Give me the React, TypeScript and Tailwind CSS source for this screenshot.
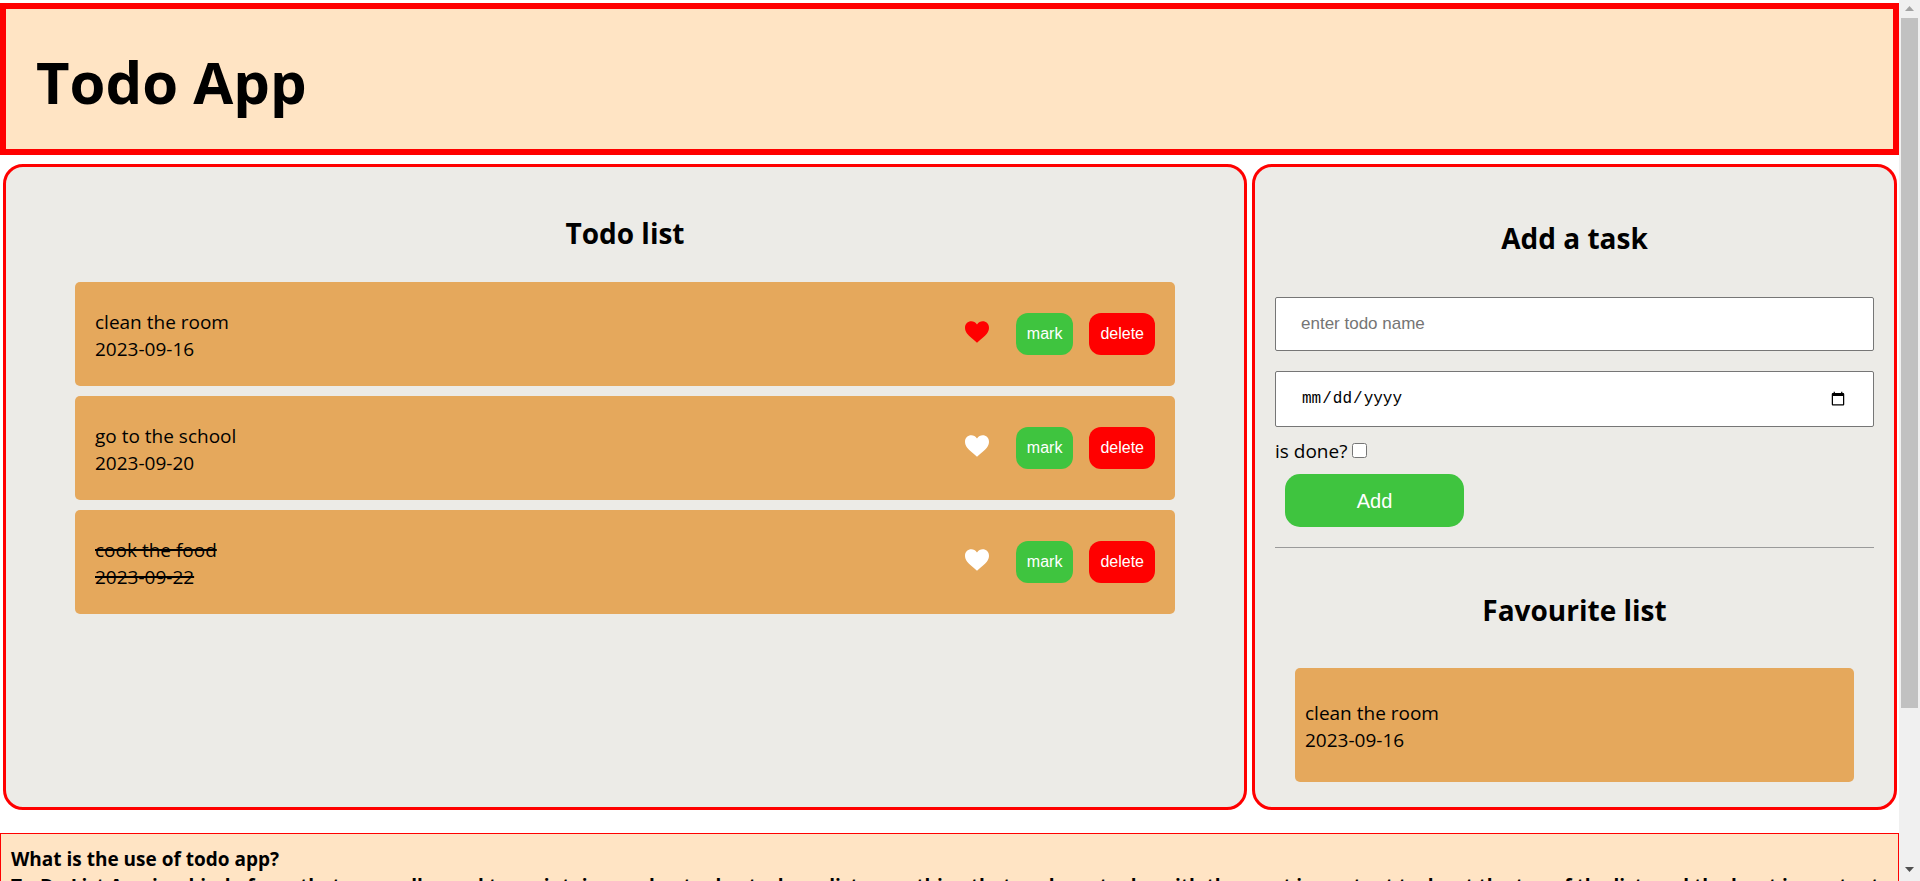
import { useState } from "react";

type Todo = { id: number; name: string; date: string; done: boolean; favourite: boolean };

const initialTodos: Todo[] = [
  { id: 1, name: "clean the room", date: "2023-09-16", done: false, favourite: true },
  { id: 2, name: "go to the school", date: "2023-09-20", done: false, favourite: false },
  { id: 3, name: "cook the food", date: "2023-09-22", done: true, favourite: false },
];

const buttonClass =
  "h-[42px] rounded-xl px-[11px] font-['Liberation_Sans',Arial,sans-serif] text-base text-white";

const headingClass = "text-center text-[28px] leading-[40px] font-bold";

function HeartIcon() {
  return (
    <svg viewBox="0 0 24 22" className="h-[22px] w-6" fill="currentColor" aria-hidden="true">
      <path d="M12 3.4C10.5 1.3 8.5 0.3 6.4 0.3C2.8 0.3 0 3 0 6.7C0 8.9 0.7 10.8 2.2 12.8C4.3 15.3 7.6 17.8 12 21.7C16.4 17.8 19.7 15.3 21.8 12.8C23.3 10.8 24 8.9 24 6.7C24 3 21.2 0.3 17.6 0.3C15.5 0.3 13.5 1.3 12 3.4Z" />
    </svg>
  );
}

function TodoRow({ todo, onFavourite, onMark, onDelete }: {
  todo: Todo;
  onFavourite: () => void;
  onMark: () => void;
  onDelete: () => void;
}) {
  return (
    <li className="flex items-center justify-between rounded-[5px] bg-[#e5a85c] px-5 py-[23px]">
      <div className={todo.done ? "pt-1 line-through decoration-2" : "pt-1"}>
        <p>{todo.name}</p>
        <p>{todo.date}</p>
      </div>
      <div className="flex items-center gap-4">
        <button
          type="button"
          aria-label="favourite"
          onClick={onFavourite}
          className={todo.favourite ? "mr-[11px] mb-1 text-[#ff0000]" : "mr-[11px] mb-1 text-white"}
        >
          <HeartIcon />
        </button>
        <button type="button" onClick={onMark} className={`${buttonClass} bg-[#3fc43f]`}>mark</button>
        <button type="button" onClick={onDelete} className={`${buttonClass} bg-[#ff0000]`}>delete</button>
      </div>
    </li>
  );
}

function ScrollTrack() {
  return (
    <div aria-hidden="true" className="flex w-[21px] shrink-0 flex-col items-center bg-[#f0f0f0]">
      <svg viewBox="0 0 21 18" className="h-[18px] w-[21px]" fill="#a3a3a3">
        <path d="M10.5 6 L15 11 H6 Z" />
      </svg>
      <div className="w-[17px] grow-[690] basis-0 bg-[#c1c1c1]" />
      <div className="grow-[155] basis-0" />
      <svg viewBox="0 0 21 18" className="h-[18px] w-[21px]" fill="#505050">
        <path d="M6 4 H15 L10.5 9 Z" />
      </svg>
    </div>
  );
}

export default function App() {
  const [todos, setTodos] = useState(initialTodos);
  const [name, setName] = useState("");
  const [date, setDate] = useState("");
  const [done, setDone] = useState(false);

  const update = (id: number, change: Partial<Todo>) =>
    setTodos(todos.map((t) => (t.id === id ? { ...t, ...change } : t)));

  const add = () => {
    if (!name) return;
    setTodos([...todos, { id: Date.now(), name, date, done, favourite: false }]);
    setName("");
    setDate("");
    setDone(false);
  };

  return (
    <div className="flex h-screen bg-white font-['Open_Sans','Noto_Sans',sans-serif] text-[19px] leading-[27px] text-black">
      <div className="min-w-0 flex-1 overflow-y-auto [scrollbar-width:none]">
        <header className="mt-[3px] border-[6px] border-[#ff0000] bg-[#ffe4c4] px-[30px] pt-[33px] pb-[27px]">
          <h1 className="text-[58px] leading-[80px] font-bold">Todo App</h1>
        </header>

        <main className="mt-[9px] grid grid-cols-[1244fr_645fr] gap-[5px] pr-[2px] pl-[3px]">
          <section className="rounded-[20px] border-[3px] border-[#ff0000] bg-[#ecebe7] px-[69px] pt-[46px]">
            <h2 className={headingClass}>Todo list</h2>
            <ul className="mt-[29px] flex flex-col gap-[10px]">
              {todos.map((t) => (
                <TodoRow
                  key={t.id}
                  todo={t}
                  onFavourite={() => update(t.id, { favourite: !t.favourite })}
                  onMark={() => update(t.id, { done: !t.done })}
                  onDelete={() => setTodos(todos.filter((x) => x.id !== t.id))}
                />
              ))}
            </ul>
          </section>

          <section className="rounded-[20px] border-[3px] border-[#ff0000] bg-[#ecebe7] px-5 pt-[51px] pb-[25px]">
            <h2 className={headingClass}>Add a task</h2>
            <form
              className="mt-[39px]"
              onSubmit={(e) => {
                e.preventDefault();
                add();
              }}
            >
              <input
                type="text"
                aria-label="todo name"
                placeholder="enter todo name"
                value={name}
                onChange={(e) => setName(e.target.value)}
                className="block h-[54px] w-full rounded-[2px] border border-[#767676] bg-white px-[25px] font-['Liberation_Sans',Arial,sans-serif] text-[17px] placeholder:text-[#757575]"
              />
              <input
                type="date"
                aria-label="todo date"
                value={date}
                onChange={(e) => setDate(e.target.value)}
                className="mt-5 block h-14 w-full rounded-[2px] border border-[#767676] bg-white px-[25px] font-['Liberation_Mono',monospace] text-base"
              />
              <div className="mt-[11px] flex items-center gap-[5px]">
                <label htmlFor="done">is done?</label>
                <input
                  id="done"
                  type="checkbox"
                  checked={done}
                  onChange={(e) => setDone(e.target.checked)}
                  className="mb-[2px] size-[15px]"
                />
              </div>
              <button
                type="submit"
                className="mt-[9px] ml-[10px] block h-[53px] w-[179px] rounded-[15px] bg-[#3fc43f] font-['Liberation_Sans',Arial,sans-serif] text-xl text-white"
              >
                Add
              </button>
            </form>
            <hr className="mt-5 border-t border-[#9a9a9a]" />
            <h2 className={`mt-[42px] ${headingClass}`}>Favourite list</h2>
            <ul className="mt-[38px] flex flex-col gap-[10px] px-5">
              {todos.filter((t) => t.favourite).map((t) => (
                <li key={t.id} className="rounded-[5px] bg-[#e5a85c] px-[10px] pt-8 pb-7">
                  <p>{t.name}</p>
                  <p>{t.date}</p>
                </li>
              ))}
            </ul>
          </section>
        </main>

        <footer className="mt-[23px] border border-[#ff0000] bg-[#ffe4c4] px-[10px] pt-3 pb-2 font-bold">
          <h3>What is the use of todo app?</h3>
          <p>
            To-Do List App is a kind of app that generally used to maintain our day-to-day tasks or list everything that we
            have to do, with the most important tasks at the top of the list, and the least important tasks at the bottom.
          </p>
        </footer>
      </div>
      <ScrollTrack />
    </div>
  );
}
